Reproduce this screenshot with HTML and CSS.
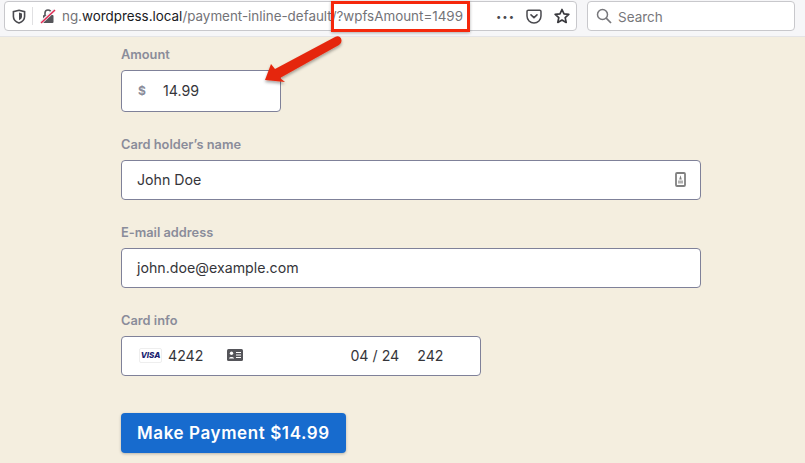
FILE: index.html
```html
<!DOCTYPE html>
<html lang="en">
<head>
  <meta charset="UTF-8" />
  <title>Payment</title>
  <link rel="stylesheet" href="styles.css">
</head>
<body>
  <div class="toolbar">
    <div class="urlbar">
      <svg class="shield" width="14" height="15" viewBox="0 0 14 15"><path d="M7 1.2 12.6 2.6V7.5C12.6 10.6 10.4 12.8 7 14 3.6 12.8 1.4 10.6 1.4 7.5V2.6Z" fill="none" stroke="#4a4a4f" stroke-width="1.6"/><path d="M7 3.6 10 4.4V7.5C10 9.2 8.8 10.5 7 11.3Z" fill="#4a4a4f"/></svg>
      <span class="sep"></span>
      <svg class="lock" width="16" height="16" viewBox="0 0 16 16"><path d="M5 7V5a3 3 0 0 1 6 0v2" fill="none" stroke="#55555a" stroke-width="1.6"/><rect x="3" y="7" width="10.500" height="8" rx="1" fill="#55555a"/><path d="M1 14.500 14.500 2" stroke="#f0f0f4" stroke-width="3.500"/><path d="M1 15 15 2" stroke="#e22850" stroke-width="1.5"/></svg>
      <div class="url"><span class="host">ng.<b>wordpress.local</b></span>/payment-inline-default/?wpfsAmount=1499</div>
      <span class="dots">•••</span>
      <svg class="pocket" width="16" height="15" viewBox="0 0 16 15"><path d="M1 2.500A1.300 1.300 0 0 1 2.300 1.200H13.700A1.300 1.300 0 0 1 15 2.500V7A7 7 0 0 1 1 7Z" fill="none" stroke="#4a4a4f" stroke-width="1.500"/><path d="M5 5.800 8 8.600 11 5.800" fill="none" stroke="#4a4a4f" stroke-width="1.600" stroke-linecap="round"/></svg>
      <svg class="star" width="16" height="16" viewBox="0 0 16 16"><path d="M8 1.500 10 5.900 14.800 6.400 11.200 9.600 12.200 14.400 8 12 3.800 14.400 4.800 9.600 1.200 6.400 6 5.900Z" fill="none" stroke="#38383d" stroke-width="1.700" stroke-linejoin="round"/></svg>
    </div>
    <div class="searchbar">
      <svg width="16" height="16" viewBox="0 0 16 16"><circle cx="6.500" cy="6.500" r="5" fill="none" stroke="#77777b" stroke-width="1.500"/><path d="M10.200 10.200 15 15" stroke="#77777b" stroke-width="1.700"/></svg>
      <span>Search</span>
    </div>
  </div>

  <form class="payment">
    <div class="field">
      <label>Amount</label>
      <div class="input amount"><span class="currency">$</span><span>14.99</span></div>
    </div>
    <div class="field">
      <label>Card holder’s name</label>
      <div class="input wide">
        <span>John Doe</span>
        <svg class="contact" width="11" height="15" viewBox="0 0 11 15"><rect x="1" y="1" width="9" height="13" rx="1" fill="none" stroke="#808080" stroke-width="1.800"/><path d="M5.500 3.200 6.800 7.500H4.200Z" fill="#808080"/><rect x="3" y="8.500" width="5" height="3" fill="#b0b0b0"/></svg>
      </div>
    </div>
    <div class="field">
      <label>E-mail address</label>
      <div class="input wide"><span>john.doe@example.com</span></div>
    </div>
    <div class="field">
      <label>Card info</label>
      <div class="input wide card">
        <span class="visa">VISA</span>
        <span class="number">4242</span>
        <svg class="idcard" width="16" height="12" viewBox="0 0 16 12"><rect width="16" height="12" rx="1.500" fill="#55555a"/><circle cx="4.500" cy="4.200" r="1.700" fill="#fff"/><path d="M2 9.500C2 7.500 7 7.500 7 9.500Z" fill="#fff"/><path d="M9 3.500H14M9 6H14M9 8.500H14" stroke="#fff" stroke-width="1.200"/></svg>
        <span class="expiry">04 / 24</span>
        <span class="cvc">242</span>
      </div>
    </div>
    <button type="button" class="pay">Make Payment $14.99</button>
  </form>

  <div class="highlight"></div>
  <svg class="arrow" width="90" height="60" viewBox="0 0 90 60">
    <defs><filter id="shade" x="-20%" y="-20%" width="140%" height="150%"><feDropShadow dx="0" dy="2" stdDeviation="1.500" flood-color="#000" flood-opacity="0.350"/></filter></defs>
    <path d="M3 45 9 29 13 34 73 2C79 -1 82 7 77 10L18 43 23 47Z" fill="#e5280e" filter="url(#shade)"/>
  </svg>
</body>
</html>
```

FILE: styles.css
```css
* {
  box-sizing: border-box;
}
body {
  margin: 0;
  height: 463px;
  overflow: hidden;
  position: relative;
  background: #f4eedf;
  font-family: Inter, 'Liberation Sans', sans-serif;
  color: #38383d;
}
.toolbar {
  display: flex;
  gap: 10px;
  height: 37px;
  padding: 1px 10px 5px 4px;
  background: #f6f6f8;
  border-bottom: 1px solid #e4e4e6;
}
.urlbar, .searchbar {
  display: flex;
  align-items: center;
  height: 30px;
  background: white;
  border: 1px solid #c8c8cc;
  border-radius: 4px;
}
.urlbar {
  width: 573px;
  padding: 0 6px 0 7px;
}
.sep {
  width: 1px;
  height: 18px;
  margin: 0 7px 0 6px;
  background: #e0e0e2;
}
.lock {
  flex: none;
}
.url {
  width: 405px;
  flex: none;
  margin-left: 6px;
  font-size: 13.400px;
  color: #737377;
  white-space: nowrap;
}
.url b {
  font-weight: 400;
  color: #1a1a1e;
}
.host {
  color: #737377;
}
.dots {
  margin-left: 29px;
  font-size: 9.500px;
  letter-spacing: 1px;
  color: #4a4a4f;
}
.pocket {
  margin-left: 11px;
}
.star {
  margin-left: 12px;
}
.searchbar {
  flex: 1;
  gap: 6px;
  padding-left: 8px;
  font-size: 13.500px;
  color: #77777b;
}
.searchbar span {
  margin-top: 1px;
}
.payment {
  display: flex;
  flex-direction: column;
  align-items: flex-start;
  padding: 10px 0 0 121px;
}
.field {
  display: flex;
  flex-direction: column;
  margin-bottom: 25px;
}
label {
  margin-bottom: 7px;
  font-size: 12.800px;
  line-height: 16px;
  font-weight: 600;
  color: #8a8c9a;
}
.input {
  display: flex;
  align-items: center;
  height: 40px;
  padding: 0 15px 2px;
  background: white;
  border: 1px solid #7f8199;
  border-radius: 4px;
  font-size: 14.200px;
  color: #35353a;
}
.amount {
  width: 160px;
  height: 42px;
}
.currency {
  width: 25px;
  margin-left: 1px;
  font-size: 12px;
  font-weight: 700;
  color: #8a8c9a;
}
.wide {
  width: 580px;
  justify-content: space-between;
}
.contact {
  margin-right: -1px;
}
.card {
  width: 360px;
  justify-content: flex-start;
  padding-left: 17px;
}
.visa {
  width: 23px;
  height: 15px;
  border: 1px solid #eeeeee;
  border-radius: 2px;
  font-size: 8px;
  line-height: 13px;
  font-weight: 800;
  font-style: italic;
  text-align: center;
  color: #1a1f71;
}
.number {
  margin-left: 6px;
}
.idcard {
  margin-left: 24px;
}
.expiry {
  margin-left: 107px;
}
.cvc {
  margin-left: 18px;
}
.pay {
  height: 40px;
  margin-top: 12px;
  padding: 0 16px;
  background: #176bce;
  border: none;
  border-radius: 4px;
  box-shadow: 0 1px 3px rgba(0,0,0,0.25);
  font-family: Inter, 'Liberation Sans', sans-serif;
  font-size: 17px;
  font-weight: 600;
  letter-spacing: 0.6px;
  color: white;
}
.highlight {
  position: absolute;
  left: 331px;
  top: 1px;
  width: 139px;
  height: 31px;
  border: 3px solid #f5280c;
  box-shadow: 0 1px 3px rgba(0,0,0,0.3);
}
.arrow {
  position: absolute;
  left: 262px;
  top: 35px;
  overflow: visible;
}
```
